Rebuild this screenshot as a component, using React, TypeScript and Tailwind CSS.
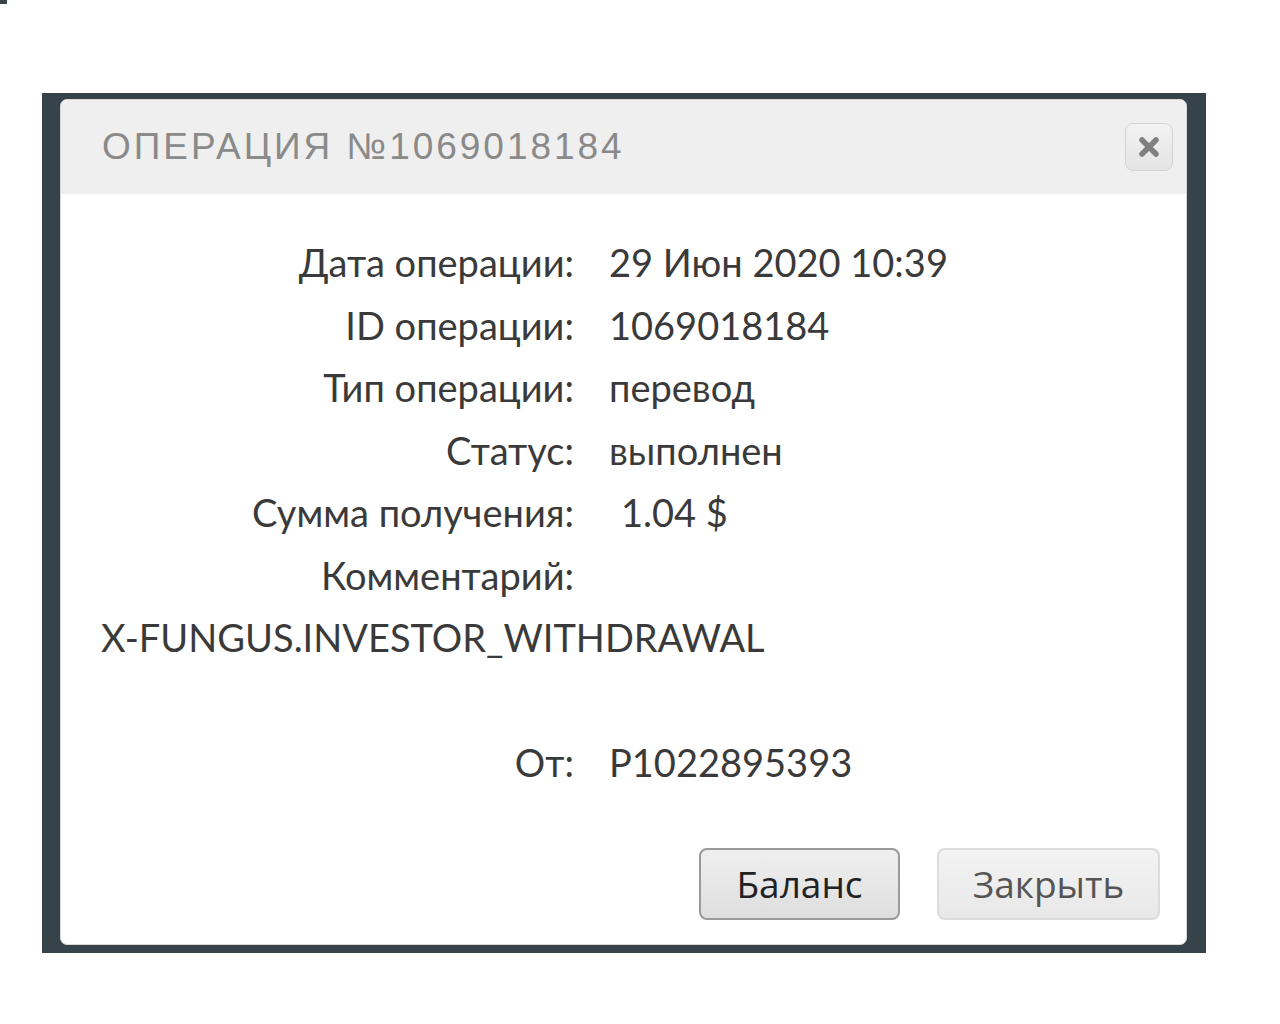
const rows: { label: string; value: string; indent?: boolean }[] = [
  { label: "Дата операции:", value: "29 Июн 2020 10:39" },
  { label: "ID операции:", value: "1069018184" },
  { label: "Тип операции:", value: "перевод" },
  { label: "Статус:", value: "выполнен" },
  { label: "Сумма получения:", value: "1.04 $", indent: true },
  { label: "Комментарий:", value: "" },
];

function Row({ label, value, indent }: { label: string; value: string; indent?: boolean }) {
  return (
    <div className="flex h-[62.5px] items-center">
      <div className="w-[513px] shrink-0 text-right">{label}</div>
      <div className={indent ? "pl-[47px]" : "pl-[35px]"}>{value}</div>
    </div>
  );
}

export default function App() {
  return (
    <div className="h-[1024px] w-full bg-white">
      <div className="h-[4px] w-[7px] bg-[#37434b]" />
      <div className="ml-[42px] mt-[89px] h-[860px] w-[1164px] bg-[#37434b] pb-[8px] pl-[18px] pr-[19px] pt-[6px]">
        <div className="flex h-full flex-col overflow-hidden rounded-[7px] border border-[#d6d6d6] bg-white">
          <div className="flex h-[94px] shrink-0 items-center justify-between bg-[#efefef] pl-[41px] pr-[13px]">
            <h1 className="font-['Liberation_Sans',sans-serif] text-[37px] tracking-[0.08em] text-[#8a8a8a]">
              ОПЕРАЦИЯ №1069018184
            </h1>
            <button className="flex h-[48px] w-[48px] items-center justify-center rounded-[8px] border border-[#d2d2d2] bg-gradient-to-b from-[#f2f2f2] to-[#e4e4e4]">
              <svg width="24" height="24" viewBox="0 0 24 24">
                <path d="M5 5 L19 19 M19 5 L5 19" stroke="#7f7f7f" strokeWidth="5.5" strokeLinecap="round" />
              </svg>
            </button>
          </div>
          <div className="flex flex-1 flex-col pt-[37px] font-['Lato',sans-serif] text-[38px] leading-none text-[#3a3a3a]">
            {rows.map((r) => (
              <Row key={r.label} {...r} />
            ))}
            <div className="flex h-[62.5px] items-center pl-[40px]">X-FUNGUS.INVESTOR_WITHDRAWAL</div>
            <div className="h-[62.5px]" />
            <Row label="От:" value="P1022895393" />
            <div className="mt-[54px] flex justify-end gap-[37px] pr-[26px] font-['Open_Sans',sans-serif] text-[37px]">
              <button className="h-[72px] w-[201px] rounded-[8px] border-2 border-[#9a9a9a] bg-gradient-to-b from-[#efefef] to-[#dedede] text-[#222]">
                Баланс
              </button>
              <button className="h-[72px] w-[223px] rounded-[8px] border-2 border-[#dcdcdc] bg-gradient-to-b from-[#f3f3f3] to-[#e8e8e8] text-[#555]">
                Закрыть
              </button>
            </div>
          </div>
        </div>
      </div>
    </div>
  );
}
